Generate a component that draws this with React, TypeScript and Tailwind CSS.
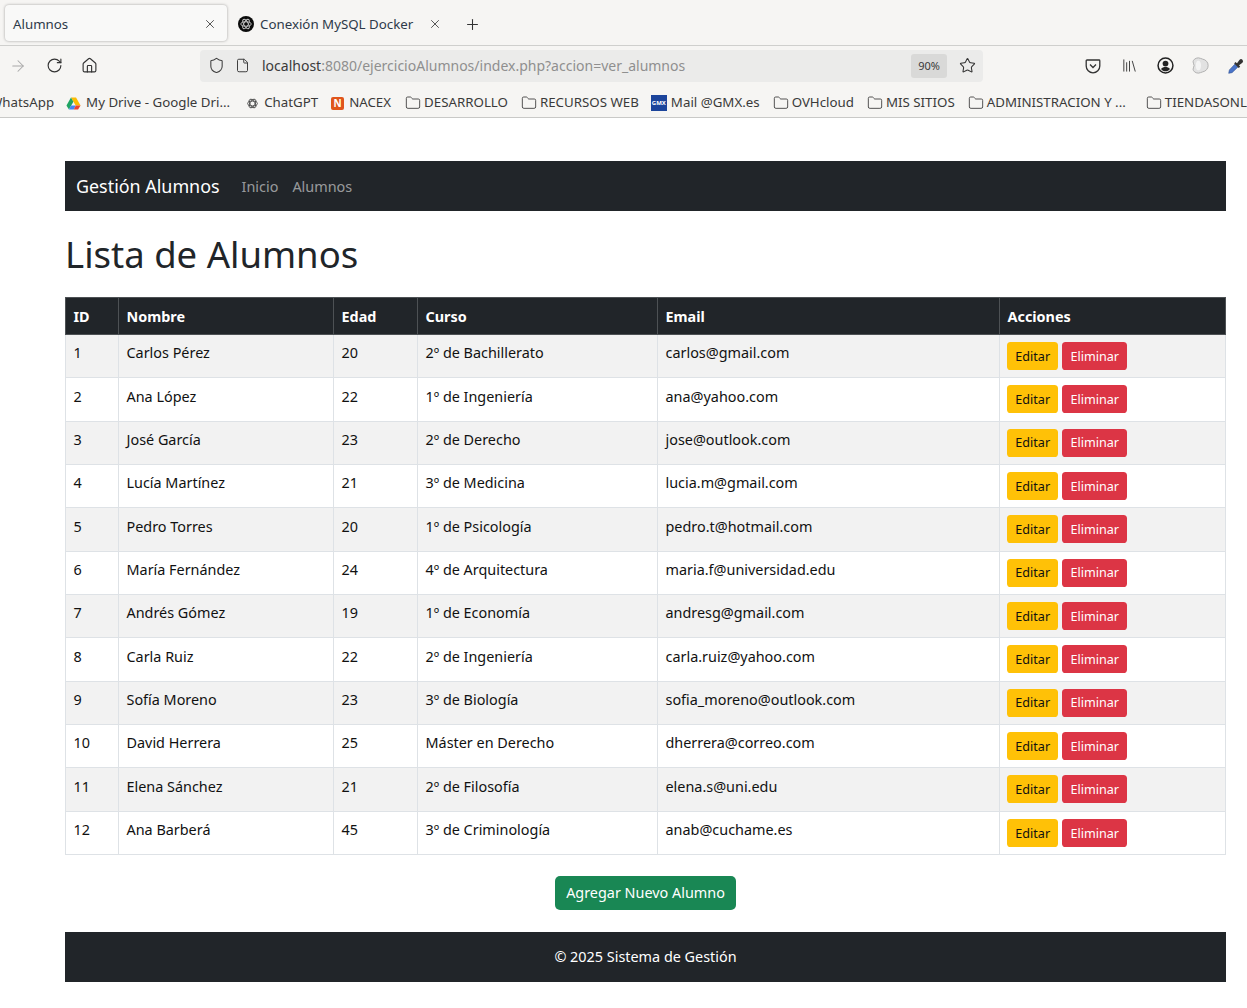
import React from 'react';
import { ArrowRight, RotateCw, Home, Shield, File, Star, X, Plus, Folder, Library } from 'lucide-react';

const alumnos = [
  [1, 'Carlos Pérez', 20, '2º de Bachillerato', 'carlos@gmail.com'],
  [2, 'Ana López', 22, '1º de Ingeniería', 'ana@yahoo.com'],
  [3, 'José García', 23, '2º de Derecho', 'jose@outlook.com'],
  [4, 'Lucía Martínez', 21, '3º de Medicina', 'lucia.m@gmail.com'],
  [5, 'Pedro Torres', 20, '1º de Psicología', 'pedro.t@hotmail.com'],
  [6, 'María Fernández', 24, '4º de Arquitectura', 'maria.f@universidad.edu'],
  [7, 'Andrés Gómez', 19, '1º de Economía', 'andresg@gmail.com'],
  [8, 'Carla Ruiz', 22, '2º de Ingeniería', 'carla.ruiz@yahoo.com'],
  [9, 'Sofía Moreno', 23, '3º de Biología', 'sofia_moreno@outlook.com'],
  [10, 'David Herrera', 25, 'Máster en Derecho', 'dherrera@correo.com'],
  [11, 'Elena Sánchez', 21, '2º de Filosofía', 'elena.s@uni.edu'],
  [12, 'Ana Barberá', 45, '3º de Criminología', 'anab@cuchame.es'],
];

function OpenAiDot({ className }: { className: string }) {
  return (
    <svg viewBox="0 0 16 16" className={className}>
      <circle cx="8" cy="8" r="8" fill="#0b0b0b" />
      <g fill="none" stroke="#c4c4c4" strokeWidth="0.9">
        <ellipse cx="8" cy="8" rx="5.200" ry="2.200" />
        <ellipse cx="8" cy="8" rx="5.200" ry="2.200" transform="rotate(60 8 8)" />
        <ellipse cx="8" cy="8" rx="5.200" ry="2.200" transform="rotate(120 8 8)" />
      </g>
    </svg>
  );
}

function Bookmark({ label, gap = 'mr-[13px]' }: { label: string; gap?: string }) {
  return (
    <span className={`flex items-center gap-[3px] shrink-0 ${gap}`}>
      <Folder size={16} strokeWidth={1.3} className="text-[#3a3a3a]" />
      <span>{label}</span>
    </span>
  );
}

function BrowserChrome() {
  return (
    <div className="bg-[#f6f5f3] text-[#3a3a3a] text-[13.3px] border-b border-[#c9c9c7]">
      {/* tabs */}
      <div className="h-[46px] flex items-start pt-[5px] pl-[5px] border-b border-[#cfcfcd]">
        <div className="w-[222px] h-[36px] bg-[#f9f9f8] rounded-[4px] shadow-[0_0_3px_rgba(0,0,0,0.35)] flex items-center pl-2 pr-[10px] justify-between text-[#2e3a4a]">
          <span className="translate-y-[2px]">Alumnos</span>
          <X size={14} strokeWidth={1.4} className="text-[#333] translate-y-[1px]" />
        </div>
        <div className="flex items-center h-[36px] ml-[11px] text-[#2e3a4a]">
          <OpenAiDot className="w-4 h-4 mr-[6px] translate-y-[1px]" />
          <span className="w-[168px] translate-y-[2px]">Conexión MySQL Docker</span>
          <X size={14} strokeWidth={1.4} className="text-[#333] translate-y-[1px]" />
          <Plus size={17} strokeWidth={1.5} className="ml-[22px] text-[#333] translate-y-[1px]" />
        </div>
      </div>
      {/* toolbar */}
      <div className="h-[43px] flex items-center pl-[9px] pb-[4px]">
        <ArrowRight size={18} strokeWidth={1.4} className="text-[#a8a8a8] shrink-0" />
        <RotateCw size={17} strokeWidth={1.6} className="ml-[19px] text-[#333] shrink-0" />
        <Home size={17} strokeWidth={1.6} className="ml-[18px] text-[#333] shrink-0" />
        <div className="ml-[102px] w-[783px] h-[32px] bg-[#ebebea] rounded-[4px] flex items-center pl-[8px] pr-[7px] shrink-0">
          <Shield size={17} strokeWidth={1.5} className="text-[#3f3f3f]" />
          <File size={15} strokeWidth={1.6} className="ml-[10px] text-[#3f3f3f]" />
          <span className="ml-[12px] text-[14px] text-[#3a3a3a]">localhost<span className="text-[#8f8f8f]">:8080/ejercicioAlumnos/index.php?accion=ver_alumnos</span></span>
          <span className="ml-auto w-[36px] h-[24px] bg-[#d9d9d8] rounded-[3px] text-[11px] flex items-center justify-center -translate-x-px">90%</span>
          <Star size={17} strokeWidth={1.5} className="ml-[11px] text-[#333]" />
        </div>
        <svg viewBox="0 0 16 16" className="w-4 h-4 ml-[102px] text-[#333] shrink-0" fill="none" stroke="currentColor" strokeWidth="1.3">
          <path d="M2 2h12a.8.8 0 0 1 .8.8V8a6.800 6.800 0 0 1-13.600 0V2.800a.8.8 0 0 1 .8-.8z" />
          <path d="M5 6.500l3 3 3-3" />
        </svg>
        <Library size={17} strokeWidth={1.3} className="ml-[20px] text-[#333] shrink-0" />
        <svg viewBox="0 0 16 16" className="w-[17px] h-[17px] ml-[19px] shrink-0">
          <circle cx="8" cy="8" r="7" fill="none" stroke="#222" strokeWidth="1.4" />
          <circle cx="8" cy="6.200" r="2.700" fill="#222" />
          <path d="M3.800 11.300c1-1.500 2.500-2 4.200-2s3.200.5 4.200 2c-1 1.300-2.500 2.200-4.200 2.200s-3.200-.9-4.200-2.200z" fill="#222" />
        </svg>
        <svg viewBox="0 0 16 16" className="w-[17px] h-[17px] ml-[18px] shrink-0">
          <path d="M6 .8c1.800 0 2.500 1 4 1.200 3 .5 5.200 3 5.200 6s-2.200 5.500-5.200 6c-1.500.2-2.200 1.200-4 1.200C3 15.200 1 13 1 11.500 1 10 2 9 2 8S1 6 1 4.500C1 3 3 .8 6 .8z" fill="#e2e2e2" stroke="#aeaeae" strokeWidth="0.9" />
          <path d="M6 3.500c1.700 0 2.500 2 2.500 4.500s-.8 4.500-2.500 4.500S3.500 10.500 3.500 8 4.300 3.500 6 3.500z" fill="#f4f4f4" />
        </svg>
        <svg viewBox="0 0 16 16" className="w-[18px] h-[18px] ml-[18px] shrink-0">
          <path d="M1.500 14.500l.6-3 5-5.200 2.600 2.600-5.200 5-3 .6z" fill="#4a74c9" stroke="#2f4f8f" strokeWidth="0.5" />
          <path d="M7.500 4.500l1.400 1 2.300-3a1.700 1.700 0 0 1 2.500 2.500l-3 2.300 1 1.400-1.300 1-4-4z" fill="#333" />
        </svg>
      </div>
      {/* bookmarks */}
      <div className="h-[28px] flex items-center overflow-hidden whitespace-nowrap">
        <span className="shrink-0 -ml-[10px] mr-[12px]">WhatsApp</span>
        <span className="flex items-center gap-[5px] shrink-0 mr-[16px]">
          <svg viewBox="0 0 16 16" className="w-[15px] h-[15px]">
            <path d="M5.300 1.500h5.400l4.800 8.500h-5.200z" fill="#fbbc04" />
            <path d="M5.300 1.500L.5 10l2.600 4.500L7.900 6z" fill="#1fa463" />
            <path d="M3.100 14.500h5.100L10.500 10H5.500z" fill="#4285f4" />
            <path d="M8.200 14.500h4.700l2.600-4.500h-5z" fill="#ea4335" />
          </svg>
          My Drive - Google Dri...
        </span>
        <span className="flex items-center gap-[5px] shrink-0 mr-[13px]">
          <svg viewBox="0 0 16 16" className="w-[13px] h-[13px]" fill="none" stroke="#3a3a3a" strokeWidth="1">
            <ellipse cx="8" cy="8" rx="6" ry="3" />
            <ellipse cx="8" cy="8" rx="6" ry="3" transform="rotate(60 8 8)" />
            <ellipse cx="8" cy="8" rx="6" ry="3" transform="rotate(120 8 8)" />
          </svg>
          ChatGPT
        </span>
        <span className="flex items-center gap-[5px] shrink-0 mr-[14px]">
          <span className="w-[13px] h-[13px] bg-[#e0551b] rounded-[2px] text-white text-[10px] font-bold flex items-center justify-center leading-none">N</span>
          NACEX
        </span>
        <Bookmark label="DESARROLLO" />
        <Bookmark label="RECURSOS WEB" gap="mr-[12px]" />
        <span className="flex items-center gap-[4px] shrink-0 mr-[13px]">
          <span className="w-4 h-4 bg-[#1c449b] text-white text-[6px] font-bold flex items-center justify-center leading-none">GMX</span>
          Mail @GMX.es
        </span>
        <Bookmark label="OVHcloud" />
        <Bookmark label="MIS SITIOS" />
        <Bookmark label="ADMINISTRACION Y ..." gap="mr-[20px]" />
        <Bookmark label="TIENDASONLINE" />
      </div>
    </div>
  );
}

export default function App() {
  return (
    <div className="min-h-[1008px] bg-white font-['Noto_Sans',sans-serif] text-[14.4px] leading-[21.6px] text-[#212529] overflow-hidden">
      <BrowserChrome />
      <div className="ml-[65px] w-[1161px] pt-[43px]">
        <nav className="h-[50px] bg-[#212529] flex items-center pl-[11px] pt-[1px]">
          <span className="text-[17.900px] text-white mr-[22px]">Gestión Alumnos</span>
          <span className="text-[#ffffff8c] mr-[14px]">Inicio</span>
          <span className="text-[#ffffff8c]">Alumnos</span>
        </nav>
        <h1 className="text-[36.500px] leading-[43.2px] font-normal mt-[22px] mb-[21px]">Lista de Alumnos</h1>
        <table className="w-full border-collapse table-fixed">
          <colgroup>
            <col className="w-[53px]" />
            <col className="w-[215px]" />
            <col className="w-[84px]" />
            <col className="w-[240px]" />
            <col className="w-[342px]" />
            <col />
          </colgroup>
          <thead>
            <tr className="h-[36.7px] bg-[#212529] text-white">
              {['ID', 'Nombre', 'Edad', 'Curso', 'Email', 'Acciones'].map(h => (
                <th key={h} className="border border-[#4d5154] px-[7.500px] pt-[2px] font-bold text-left">{h}</th>
              ))}
            </tr>
          </thead>
          <tbody>
            {alumnos.map((a, i) => (
              <tr key={a[0]} className={i % 2 === 0 ? 'h-[43.36px] bg-[#f2f2f2]' : 'h-[43.36px] bg-white'}>
                {a.map((v, j) => (
                  <td key={j} className="border border-[#dee2e6] px-[7.500px] pt-[7.300px] pb-[12px] align-top text-[#111]">{v}</td>
                ))}
                <td className="border border-[#dee2e6] px-[7.200px] pt-[7px] pb-[6px] align-top">
                  <div className="flex gap-[4px]">
                    <button type="button" className="h-[28px] w-[51px] pt-[1px] bg-[#ffc107] text-[#111] text-[12.6px] rounded-[3.600px] flex items-center justify-center">Editar</button>
                    <button type="button" className="h-[28px] w-[65px] pt-[1px] bg-[#dc3545] text-[#fff] text-[12.6px] rounded-[3.600px] flex items-center justify-center">Eliminar</button>
                  </div>
                </td>
              </tr>
            ))}
          </tbody>
        </table>
        <div className="flex justify-center mt-[21px]">
          <button type="button" className="h-[34px] w-[181px] bg-[#198754] text-white rounded-[5px] flex items-center justify-center">Agregar Nuevo Alumno</button>
        </div>
        <footer className="h-[50px] mt-[22px] bg-[#212529] text-white flex items-center justify-center">© 2025 Sistema de Gestión</footer>
      </div>
    </div>
  );
}
